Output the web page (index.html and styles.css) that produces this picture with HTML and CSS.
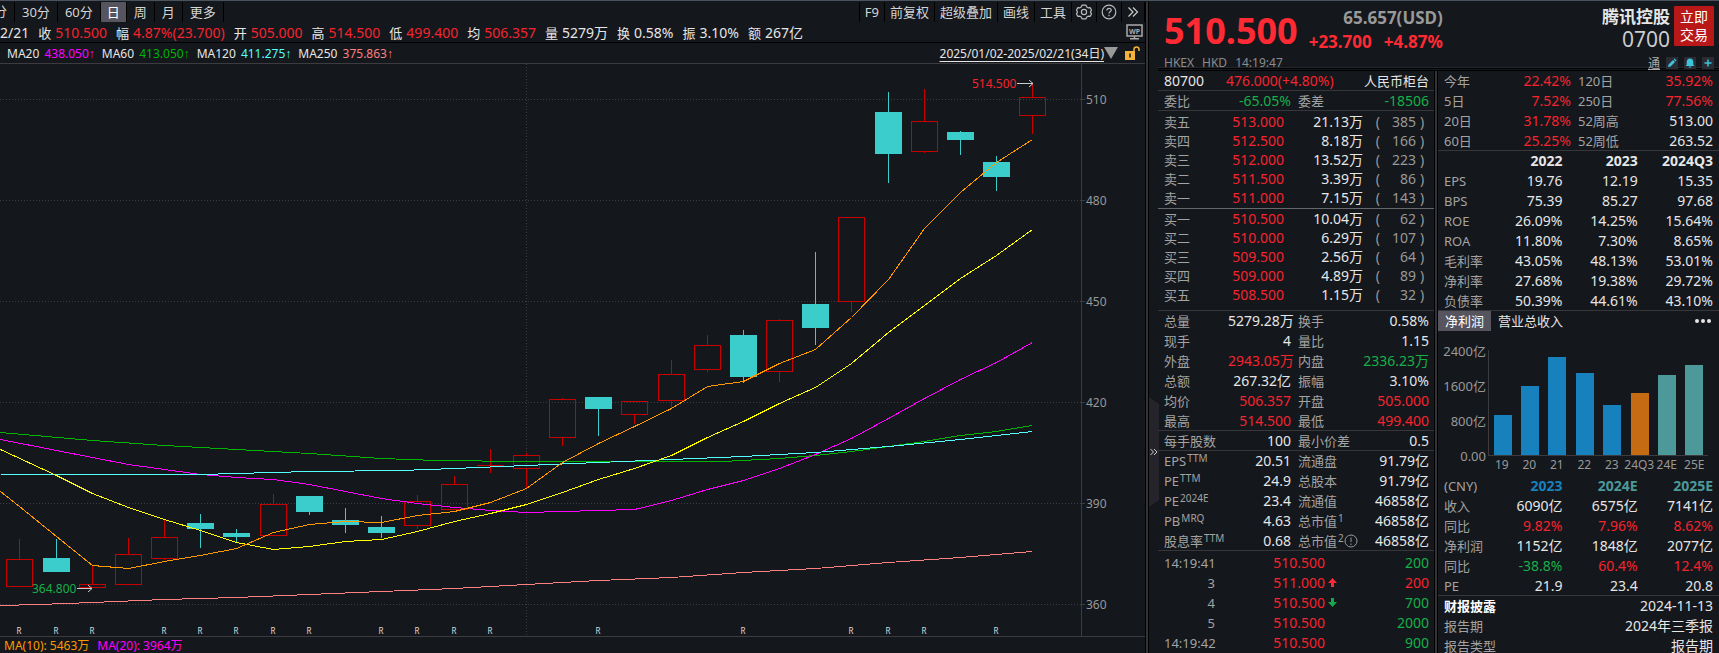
FILE: index.html
```html
<!DOCTYPE html>
<html lang="zh-CN">
<head>
  <meta charset="UTF-8">
  <title>腾讯控股 0700</title>
  <link rel="stylesheet" href="styles.css">
</head>
<body>
  <div class="app">
    <main class="chart-panel">
      <nav class="toolbar">
        <button class="tool cut">分</button>
        <button class="tool wide">30分</button>
        <button class="tool wide">60分</button>
        <button class="tool active">日</button>
        <button class="tool wide">周</button>
        <button class="tool wide">月</button>
        <button class="tool wide">更多</button>
        <span class="spacer"></span>
        <button class="tool first">F9</button>
        <button class="tool">前复权</button>
        <button class="tool">超级叠加</button>
        <button class="tool">画线</button>
        <button class="tool">工具</button>
        <button class="tool icon" aria-label="设置">
          <svg width="16" height="16" viewBox="0 0 16 16" fill="none" stroke="#bbb" stroke-width="1.2" stroke-linejoin="round">
            <path d="M6 1.200h4l.8 1.900 1.200.7 2.100-.2 1.500 2.600L14.300 8l1.300 1.800-1.500 2.600-2.100-.2-1.200.7-.8 1.900H6l-.8-1.900-1.200-.7-2.100.2L.4 9.800 1.700 8 .4 6.200l1.500-2.600 2.100.2 1.200-.7z"/>
            <circle cx="8" cy="8" r="2.600"/>
          </svg>
        </button>
        <button class="tool icon" aria-label="帮助">
          <svg width="16" height="16" viewBox="0 0 16 16" fill="none" stroke="#bbb" stroke-width="1.200">
            <circle cx="8" cy="8" r="6.800"/>
            <path d="M5.800 6.400c0-1.300 1-2.100 2.200-2.100s2.200.8 2.200 2c0 1.500-2.200 1.600-2.200 3.100M8 10.800v1.400"/>
          </svg>
        </button>
        <button class="tool" aria-label="展开">
          <svg width="12" height="14" viewBox="0 0 12 14" fill="none" stroke="#ccc" stroke-width="1.200">
            <path d="M1.500 2.500L6 7l-4.500 4.500M6 2.500L10.500 7 6 11.500"/>
          </svg>
        </button>
      </nav>

      <div class="info-row">
        <span>2/21</span>
        <span><i>收</i><b class="red">510.500</b></span>
        <span><i>幅</i><b class="red">4.87%(23.700)</b></span>
        <span><i>开</i><b class="red">505.000</b></span>
        <span><i>高</i><b class="red">514.500</b></span>
        <span><i>低</i><b class="red">499.400</b></span>
        <span><i>均</i><b class="red">506.357</b></span>
        <span><i>量</i><b>5279万</b></span>
        <span><i>换</i><b>0.58%</b></span>
        <span><i>振</i><b>3.10%</b></span>
        <span><i>额</i><b>267亿</b></span>
        <span class="spacer"></span>
        <svg width="17" height="16" viewBox="0 0 17 16" aria-hidden="true">
          <rect x="1" y="1" width="15" height="11" fill="none" stroke="#aaa" stroke-width="1.500"/>
          <path d="M8.500 12v3M4 14.700h9" stroke="#aaa" stroke-width="1.500"/>
          <text x="8.500" y="9.500" text-anchor="middle" class="wp-text">WP</text>
        </svg>
      </div>

      <div class="ma-row">
        <span class="ma5 cut-arrow">↑</span>
        <span>MA20 <b class="ma20">438.050↑</b></span>
        <span>MA60 <b class="ma60">413.050↑</b></span>
        <span>MA120 <b class="ma120">411.275↑</b></span>
        <span>MA250 <b class="ma250">375.863↑</b></span>
        <span class="spacer"></span>
        <a class="range" href="#range">2025/01/02-2025/02/21(34日)</a>
        <svg width="14" height="12" viewBox="0 0 14 12" aria-hidden="true"><path d="M0 0h14L7 12z" fill="#999"/></svg>
        <svg width="16" height="14" viewBox="0 0 16 14" aria-hidden="true">
          <rect x="0" y="5" width="10" height="9" fill="#f4b23c"/>
          <path d="M9 5V3.500a2.500 2.500 0 0 1 5 0V5" fill="none" stroke="#f4b23c" stroke-width="1.500"/>
          <path d="M5 7.500v4" stroke="#14171c" stroke-width="1.500"/>
        </svg>
      </div>

      <svg class="kline" viewBox="0 64 1145 572">
        <path class="grid" d="M0 99.500H1081M0 200.500H1081M0 301.500H1081M0 402.500H1081M0 503.500H1081M0 604.500H1081M526.500 64V636"/>
        <path class="axis" d="M1081.500 64V636M1081 99.500h4M1081 200.500h4M1081 301.500h4M1081 402.500h4M1081 503.500h4M1081 604.500h4"/>
        <g class="axis-text">
          <text x="1086" y="104">510</text>
          <text x="1086" y="205">480</text>
          <text x="1086" y="306">450</text>
          <text x="1086" y="407">420</text>
          <text x="1086" y="508">390</text>
          <text x="1086" y="609">360</text>
        </g>
        <g id="candles"></g>
        <g transform="translate(0.5 0.5)">
          <polyline class="l250" points="0,605 38,604 92,602 164,599 236,597 309,594 381,591 454,588 526,584 598,580 671,577 743,572 815,568 888,562 960,557 1032,551"/>
          <polyline class="l60" points="0,432 92,440 164,445 236,449 309,453 381,458 436,460 526,461 722,461 779,458 815,455 851,451 888,446 924,441 960,435 996,431 1032,425"/>
          <polyline class="l20" points="0,439 56,450 92,457 128,464 164,469 200,474 236,477 273,479 309,484 345,491 381,498 417,503 454,507 490,510 526,512 598,510 634,509 671,500 707,489 743,480 779,468 815,454 851,438 888,418 924,398 960,379 996,362 1032,342"/>
          <polyline class="l120" points="0,474 200,474 236,473 309,471 400,470 454,468 526,465 598,462 671,459 743,456 815,452 888,446 960,439 1032,431"/>
          <polyline class="l10" points="0,449 56,475 92,493 128,507 164,519 200,530 236,542 273,549 309,546 345,541 381,539 417,531 454,521 490,513 526,504 562,492 598,479 634,468 671,455 707,437 743,421 779,403 815,387 851,363 888,332 924,305 960,278 996,255 1032,229"/>
          <polyline class="l5" points="0,491 19,506 56,536 92,565 128,568 164,561 200,555 236,548 273,532 309,524 345,521 381,522 417,515 454,511 490,502 526,488 562,462 598,443 634,426 671,408 707,386 743,381 779,363 815,349 851,317 888,279 924,228 960,192 996,162 1032,139"/>
        </g>
        <text class="peak" x="972" y="88">514.500</text>
        <text class="low" x="32" y="593">364.800</text>
        <path class="pointer" d="M1017 83.500h16M1029 80l4 3.500-4 3.500M77 588.500h15M88 585l4 3.500-4 3.500"/>
        <g id="marks"></g>
      </svg>

      <div class="volume-row">
        <span class="ma5">MA(10): 5463万</span>
        <span class="ma20">MA(20): 3964万</span>
      </div>
    </main>

    <aside class="side">
      <button class="collapse" aria-label="收起">
        <svg width="10" height="110" viewBox="0 0 10 110">
          <path d="M0 0l10 7v96l-10 7z" fill="#26242b"/>
          <path d="M1.500 52l3 3-3 3M5 52l3 3-3 3" fill="none" stroke="#ccc"/>
        </svg>
      </button>
      <div class="side-main">
        <header class="quote">
          <div class="quote-top">
            <strong class="price">510.500</strong>
            <div class="change">
              <span class="usd">65.657(USD)</span>
              <span class="delta"><span>+23.700</span><span>+4.87%</span></span>
            </div>
            <div class="name">
              <h1>腾讯控股</h1>
              <span class="code">0700</span>
            </div>
            <button class="trade">立即<br>交易</button>
          </div>
          <div class="quote-sub">
            <span>HKEX</span><span>HKD</span><span>14:19:47</span>
            <span class="spacer"></span>
            <a class="tong" href="#connect">通</a>
            <button class="mini" aria-label="编辑">
              <svg width="12" height="12" viewBox="0 0 12 12"><path d="M2 10l.6-2.600L7 3l2 2-4.400 4.400zM7.600 2.400L8.500 1.500l2 2-.9.9z" fill="#3cc4dc"/></svg>
            </button>
            <button class="mini" aria-label="提醒">
              <svg width="12" height="12" viewBox="0 0 12 12"><path d="M6 1.500c2.200 0 3.300 1.600 3.300 3.500v2.500l1 1.500H1.700l1-1.500V5c0-1.900 1.100-3.500 3.300-3.500zM4.800 9.500h2.400v1H4.800z" fill="#3cc4dc"/></svg>
            </button>
            <button class="mini" aria-label="添加">
              <svg width="12" height="12" viewBox="0 0 12 12"><path d="M6 2.500v7M2.500 6h7" stroke="#3cc4dc" stroke-width="1.500"/></svg>
            </button>
          </div>
        </header>

        <div class="columns">
          <section class="col-left">
            <div class="block counter">
              <span>80700</span>
              <span class="red">476.000(+4.80%)</span>
              <span class="cn">人民币柜台</span>
            </div>
            <div class="block">
              <table class="pairs">
                <tr><th>委比</th><td class="green">-65.05%</td><th>委差</th><td class="green">-18506</td></tr>
              </table>
            </div>
            <div class="block asks">
              <table class="book">
                <tr><th>卖五</th><td>513.000</td><td>21.13万</td><td>(</td><td>385</td><td>)</td></tr>
                <tr><th>卖四</th><td>512.500</td><td>8.18万</td><td>(</td><td>166</td><td>)</td></tr>
                <tr><th>卖三</th><td>512.000</td><td>13.52万</td><td>(</td><td>223</td><td>)</td></tr>
                <tr><th>卖二</th><td>511.500</td><td>3.39万</td><td>(</td><td>86</td><td>)</td></tr>
                <tr><th>卖一</th><td>511.000</td><td>7.15万</td><td>(</td><td>143</td><td>)</td></tr>
              </table>
            </div>
            <div class="block bids">
              <table class="book">
                <tr><th>买一</th><td>510.500</td><td>10.04万</td><td>(</td><td>62</td><td>)</td></tr>
                <tr><th>买二</th><td>510.000</td><td>6.29万</td><td>(</td><td>107</td><td>)</td></tr>
                <tr><th>买三</th><td>509.500</td><td>2.56万</td><td>(</td><td>64</td><td>)</td></tr>
                <tr><th>买四</th><td>509.000</td><td>4.89万</td><td>(</td><td>89</td><td>)</td></tr>
                <tr><th>买五</th><td>508.500</td><td>1.15万</td><td>(</td><td>32</td><td>)</td></tr>
              </table>
            </div>
            <div class="block">
              <table class="pairs">
                <tr><th>总量</th><td>5279.28万</td><th>换手</th><td>0.58%</td></tr>
                <tr><th>现手</th><td>4</td><th>量比</th><td>1.15</td></tr>
                <tr><th>外盘</th><td class="red">2943.05万</td><th>内盘</th><td class="green">2336.23万</td></tr>
                <tr><th>总额</th><td>267.32亿</td><th>振幅</th><td>3.10%</td></tr>
                <tr><th>均价</th><td class="red">506.357</td><th>开盘</th><td class="red">505.000</td></tr>
                <tr><th>最高</th><td class="red">514.500</td><th>最低</th><td class="red">499.400</td></tr>
              </table>
            </div>
            <div class="block">
              <table class="pairs">
                <tr><th>每手股数</th><td>100</td><th>最小价差</th><td>0.5</td></tr>
              </table>
            </div>
            <div class="block">
              <table class="pairs">
                <tr><th>EPS<sup>TTM</sup></th><td>20.51</td><th>流通盘</th><td>91.79亿</td></tr>
                <tr><th>PE<sup>TTM</sup></th><td>24.9</td><th>总股本</th><td>91.79亿</td></tr>
                <tr><th>PE<sup>2024E</sup></th><td>23.4</td><th>流通值</th><td>46858亿</td></tr>
                <tr><th>PB<sup>MRQ</sup></th><td>4.63</td><th>总市值<sup>1</sup></th><td>46858亿</td></tr>
                <tr><th>股息率<sup>TTM</sup></th><td>0.68</td><th>总市值<sup>2</sup><svg class="tip" width="14" height="14" viewBox="0 0 14 14" fill="none" stroke="#999"><circle cx="7" cy="7" r="6"/><path d="M7 3.500v4.500M7 9.500v1.500"/></svg></th><td>46858亿</td></tr>
              </table>
            </div>
            <table class="ticks">
              <tr><th>14:19:41</th><td class="red">510.500</td><td></td><td class="green">200</td></tr>
              <tr><th>3</th><td class="red">511.000</td><td><svg width="9" height="10" viewBox="0 0 9 10"><path d="M4.500 0L9 5H6v4H3V5H0z" fill="#ff2a33"/></svg></td><td class="red">200</td></tr>
              <tr><th>4</th><td class="red">510.500</td><td><svg width="9" height="10" viewBox="0 0 9 10"><path d="M4.500 9L0 4h3V0h3v4h3z" fill="#16a84a"/></svg></td><td class="green">700</td></tr>
              <tr><th>5</th><td class="red">510.500</td><td></td><td class="green">2000</td></tr>
              <tr><th>14:19:42</th><td class="red">510.500</td><td></td><td class="green">900</td></tr>
            </table>
          </section>

          <section class="col-right">
            <div class="block">
              <table class="pairs">
                <tr><th>今年</th><td class="red">22.42%</td><th>120日</th><td class="red">35.92%</td></tr>
                <tr><th>5日</th><td class="red">7.52%</td><th>250日</th><td class="red">77.56%</td></tr>
                <tr><th>20日</th><td class="red">31.78%</td><th>52周高</th><td>513.00</td></tr>
                <tr><th>60日</th><td class="red">25.25%</td><th>52周低</th><td>263.52</td></tr>
              </table>
            </div>
            <div class="block">
              <table class="years">
                <tr class="head"><th></th><td>2022</td><td>2023</td><td>2024Q3</td></tr>
                <tr><th>EPS</th><td>19.76</td><td>12.19</td><td>15.35</td></tr>
                <tr><th>BPS</th><td>75.39</td><td>85.27</td><td>97.68</td></tr>
                <tr><th>ROE</th><td>26.09%</td><td>14.25%</td><td>15.64%</td></tr>
                <tr><th>ROA</th><td>11.80%</td><td>7.30%</td><td>8.65%</td></tr>
                <tr><th>毛利率</th><td>43.05%</td><td>48.13%</td><td>53.01%</td></tr>
                <tr><th>净利率</th><td>27.68%</td><td>19.38%</td><td>29.72%</td></tr>
                <tr><th>负债率</th><td>50.39%</td><td>44.61%</td><td>43.10%</td></tr>
              </table>
            </div>
            <div class="tabs">
              <button class="tab active">净利润</button>
              <button class="tab">营业总收入</button>
              <span class="spacer"></span>
              <button class="more" aria-label="更多"><i></i><i></i><i></i></button>
            </div>
            <div class="bar-chart">
              <div class="y-labels"><span>2400亿</span><span>1600亿</span><span>800亿</span><span>0.00</span></div>
              <div class="plot">
                <div class="bars">
                  <div class="bar" style="height: 38%"></div>
                  <div class="bar" style="height: 66%"></div>
                  <div class="bar" style="height: 93%"></div>
                  <div class="bar" style="height: 78%"></div>
                  <div class="bar" style="height: 48%"></div>
                  <div class="bar quarter" style="height: 59%"></div>
                  <div class="bar estimate" style="height: 76%"></div>
                  <div class="bar estimate" style="height: 86%"></div>
                </div>
                <div class="x-labels"><span>19</span><span>20</span><span>21</span><span>22</span><span>23</span><span>24Q3</span><span>24E</span><span>25E</span></div>
              </div>
            </div>
            <div class="block">
              <table class="years">
                <tr class="head"><th>(CNY)</th><td class="blue">2023</td><td class="teal">2024E</td><td class="teal">2025E</td></tr>
                <tr><th>收入</th><td>6090亿</td><td>6575亿</td><td>7141亿</td></tr>
                <tr><th>同比</th><td class="red">9.82%</td><td class="red">7.96%</td><td class="red">8.62%</td></tr>
                <tr><th>净利润</th><td>1152亿</td><td>1848亿</td><td>2077亿</td></tr>
                <tr><th>同比</th><td class="green">-38.8%</td><td class="red">60.4%</td><td class="red">12.4%</td></tr>
                <tr><th>PE</th><td>21.9</td><td>23.4</td><td>20.8</td></tr>
              </table>
            </div>
            <table class="report">
              <tr><th class="title">财报披露</th><td>2024-11-13</td></tr>
              <tr><th>报告期</th><td>2024年三季报</td></tr>
              <tr><th>报告类型</th><td>报告期</td></tr>
            </table>
          </section>
        </div>
      </div>
    </aside>
  </div>

  <script>
    // x, high, body top, body bottom, low, direction
    const candles = [
      [19, 539, 559, 587, 587, 'up'], [56, 539, 558, 572, 572, 'down'],
      [92, 566, 584, 588, 588, 'up'], [128, 538, 554, 585, 585, 'up'],
      [164, 520, 537, 559, 560, 'up'], [200, 514, 523, 529, 548, 'down'],
      [236, 529, 533, 537, 542, 'down'], [273, 494, 504, 536, 536, 'up'],
      [309, 496, 496, 512, 515, 'down'], [345, 508, 520, 525, 533, 'down'],
      [381, 516, 527, 533, 538, 'down'], [417, 495, 501, 526, 529, 'up'],
      [454, 476, 484, 510, 510, 'up'], [490, 449, 465, 466, 473, 'up'],
      [526, 453, 455, 469, 488, 'up'], [562, 398, 399, 438, 446, 'up'],
      [598, 397, 397, 409, 436, 'down'], [634, 401, 401, 415, 424, 'up'],
      [671, 360, 374, 401, 408, 'up'], [707, 335, 345, 370, 372, 'up'],
      [743, 330, 335, 377, 383, 'down'], [779, 319, 320, 372, 382, 'up'],
      [815, 252, 304, 328, 345, 'down'], [851, 217, 217, 302, 312, 'up'],
      [888, 92, 112, 154, 183, 'down'], [924, 89, 121, 152, 153, 'up'],
      [960, 131, 132, 140, 155, 'down'], [996, 156, 162, 177, 191, 'down'],
      [1032, 84, 97, 116, 134, 'up']
    ];
    const marks = [19, 56, 92, 164, 200, 236, 273, 309, 381, 417, 454, 490, 598, 743, 851, 888, 924, 996];

    document.getElementById('candles').innerHTML = candles.map(([x, high, top, bottom, low, dir]) => {
      const wick = `<path class="${dir}" d="M${x + 0.5} ${high}V${top}M${x + 0.5} ${bottom}V${low}"/>`;
      if (dir === 'down') {
        return wick + `<rect class="down-body" x="${x - 13}" y="${top}" width="27" height="${bottom - top}"/>`;
      }
      if (bottom - top === 1) {
        return `<path class="up" d="M${x + 0.5} ${high}V${low}M${x - 13} ${top + 0.5}h27"/>`;
      }
      return wick + `<rect class="up" x="${x - 12.5}" y="${top + 0.5}" width="26" height="${bottom - top - 1}"/>`;
    }).join('');

    document.getElementById('marks').innerHTML =
      marks.map(x => `<text class="mark" x="${x}" y="634">R</text>`).join('');
  </script>
</body>
</html>
```
FILE: styles.css
```css
* { box-sizing: border-box; }
body {
  margin: 0;
  background: #14171c;
  color: #e6e6e6;
  font-family: "Noto Sans", "Liberation Sans", "Noto Sans CJK SC", sans-serif;
  font-size: 14px;
  overflow: hidden;
}
button {
  font: inherit;
  color: inherit;
  background: none;
  border: 0;
  padding: 0;
  cursor: pointer;
}
a { color: inherit; }
i, b { font-style: normal; font-weight: normal; }
svg { display: block; flex: none; }
.spacer { flex: 1; }

.red { color: #f5242e; }
.green { color: #16b04a; }
.blue { color: #1781bd; }
.teal { color: #4d9999; }
.ma5 { color: #ff9900; }
.ma20 { color: #ff00ff; }
.ma60 { color: #00b400; }
.ma120 { color: #54ffff; }
.ma250 { color: #ff8080; }

.app {
  display: flex;
  height: 100vh;
  border-top: 1px solid #4a535d;
  padding-top: 1px;
}

/* chart panel */
.chart-panel {
  flex: 1;
  min-width: 0;
  display: flex;
  flex-direction: column;
  overflow: hidden;
}
.toolbar {
  display: flex;
  height: 20px;
  font-size: 13px;
  line-height: 18px;
  color: #d4d4d4;
}
.tool {
  padding: 0 5px;
  border-right: 1px solid #000;
  white-space: nowrap;
}
.tool.wide { padding: 0 7px; }
.tool.icon { padding: 0 4px; }
.tool.first { border-left: 1px solid #000; }
.tool.active { padding: 0 6px; background: #55545f; color: #fff; }
.tool.cut {
  display: flex;
  justify-content: flex-end;
  width: 15px;
  padding-right: 7px;
  overflow: hidden;
}
.info-row {
  display: flex;
  align-items: center;
  gap: 9px;
  height: 21px;
  padding-right: 2px;
  border-bottom: 1px solid #000;
  white-space: nowrap;
}
.info-row i { font-size: 13px; margin-right: 4px; }
.wp-text { font-size: 7px; font-weight: bold; fill: #aaa; }
.ma-row {
  display: flex;
  align-items: center;
  gap: 7px;
  height: 21px;
  padding-right: 4px;
  border-bottom: 1px solid #3c3c40;
  font-size: 12px;
  white-space: nowrap;
}
.ma-row b { margin-left: 2px; }
.cut-arrow { margin-left: -6px; }
.range { margin-right: -7px; text-underline-offset: 3px; }
.kline {
  flex: 1;
  width: 100%;
  min-height: 0;
}
.volume-row {
  display: flex;
  gap: 8px;
  height: 17px;
  padding-left: 4px;
  border-top: 1px solid #3c3c40;
  font-size: 12px;
  line-height: 18px;
}

.kline path, .kline rect, .kline polyline { fill: none; shape-rendering: crispEdges; }
.grid { stroke: #3c3e44; stroke-dasharray: 1 2; }
.axis { stroke: #3c3c40; }
.axis-text { font-size: 12px; fill: #999; }
.kline .up { stroke: #c80000; }
.kline .down { stroke: #3bcccc; }
.kline .down-body { fill: #3bcccc; }
.l5 { stroke: #ff9900; }
.l10 { stroke: #ffff00; }
.l20 { stroke: #ff00ff; }
.l60 { stroke: #00b400; }
.l120 { stroke: #54ffff; }
.l250 { stroke: #ff8080; }
.peak { font-size: 12px; fill: #f5242e; }
.low { font-size: 12px; fill: #16b04a; }
.kline .pointer { stroke: #ccc; shape-rendering: auto; }
.mark { font-size: 8px; fill: #ddd; text-anchor: middle; }

/* quote panel */
.side {
  flex: none;
  display: flex;
  width: 574px;
  border-left: 1px solid #000;
  box-shadow: inset 2px 0 #333338, inset 3px 0 #000;
  padding-left: 3px;
}
.collapse {
  align-self: flex-start;
  width: 9px;
  padding-top: 395px;
}
.side-main {
  flex: 1;
  min-width: 0;
  overflow: hidden;
}
.quote {
  height: 69px;
  padding: 4px 5px 0 6px;
  border-bottom: 3px double #000;
  box-shadow: inset 0 -1px #26272c;
}
.quote-top { display: flex; height: 48px; }
.price {
  font-size: 36px;
  line-height: 50px;
  color: #ff2a33;
}
.change {
  display: flex;
  flex-direction: column;
  align-items: flex-end;
  margin-left: 11px;
  font-size: 17px;
  font-weight: bold;
  line-height: 24px;
}
.usd { color: #999; }
.delta { display: flex; gap: 12px; color: #ff2a33; }
.name {
  flex: 1;
  text-align: right;
  margin-right: 4px;
}
.name h1 {
  margin: 0;
  font-size: 17px;
  font-weight: bold;
  line-height: 22px;
}
.code { display: block; font-size: 21px; line-height: 22px; color: #ccc; }
.trade {
  width: 40px;
  height: 40px;
  background: #b81818;
  color: #fff;
  border-radius: 1px;
  line-height: 18px;
}
.quote-sub {
  display: flex;
  align-items: center;
  gap: 6px;
  height: 17px;
  font-size: 12px;
  color: #8c8c8c;
}
.quote-sub span + span { margin-left: 2px; }
.tong { color: #aaa; }
.mini { background: #2a2b33; }

.columns { display: flex; }
.col-left {
  flex: none;
  width: 276px;
}
.col-right {
  flex: 1;
  min-width: 0;
  border-left: 4px double #000;
  background: linear-gradient(#333338, #333338) 1px 0 / 2px 100% no-repeat border-box;
}
.block { box-shadow: inset 0 -1px #36363b; }
.asks { padding: 1px 0 2px; box-shadow: inset 0 -1px #66666b; }
.bids { padding: 0 0 7px; }
.col-left .block, .ticks { padding-left: 6px; padding-right: 5px; }
.col-right .block, .report { padding-left: 6px; padding-right: 6px; }

table {
  width: 100%;
  border-collapse: separate;
  border-spacing: 0;
  table-layout: fixed;
  line-height: 18px;
}
th, td {
  height: 20px;
  padding: 0;
  text-align: right;
  white-space: nowrap;
}
th {
  text-align: left;
  font-size: 13px;
  font-weight: normal;
  color: #a3a3a3;
}
sup {
  font-size: 10px;
  line-height: 0;
  margin-left: 1px;
  vertical-align: 4px;
}
.tip { display: inline-block; vertical-align: -2px; }

.counter {
  display: flex;
  height: 20px;
  line-height: 20px;
}
.counter .red { flex: 1; margin-left: 22px; }
.cn { font-size: 13px; }
.pairs th:nth-child(1) { width: 64px; }
.pairs td:nth-child(2) { width: 63px; }
.pairs th:nth-child(3) { width: 70px; padding-left: 7px; }
.book th, .book td { height: 19px; }
.book th { width: 40px; }
.book td:nth-child(2) { width: 80px; color: #f5242e; }
.book td:nth-child(3) { width: 79px; }
.book td:nth-child(4) { width: 17px; }
.book td:nth-child(5) { width: 36px; }
.book td:nth-child(n+4) { color: #999; }
.book td:nth-child(6) { text-align: left; padding-left: 4px; }
.ticks { padding-top: 2px; }
.ticks th { width: 51px; text-align: right; }
.ticks td:nth-child(2) { width: 110px; }
.ticks td:nth-child(3) { width: 20px; padding-left: 3px; }
.years th { width: 43px; }
.years td { width: 75px; }
.head td { font-weight: bold; }
.report th { width: 80px; }
.report .title { font-weight: bold; color: #fff; }

.tabs {
  display: flex;
  height: 20px;
  font-size: 13px;
  line-height: 18px;
}
.tab { padding: 0 7px; }
.tab.active { background: #55545f; color: #fff; }
.more {
  display: flex;
  align-items: center;
  gap: 2px;
  padding-right: 8px;
}
.more i {
  width: 4px;
  height: 4px;
  border-radius: 50%;
  background: #e6e6e6;
}
.bar-chart {
  display: flex;
  padding: 12px 11px 2px 3px;
  color: #999;
}
.y-labels {
  display: flex;
  flex-direction: column;
  width: 47px;
  padding-right: 2px;
  text-align: right;
  font-size: 13px;
}
.y-labels span { height: 35px; line-height: 16px; }
.y-labels span:last-child { height: 16px; }
.plot { flex: 1; padding-top: 7px; }
.bars {
  display: grid;
  grid-template-columns: repeat(8, 1fr);
  align-items: end;
  justify-items: center;
  height: 106px;
  border-left: 1px solid #3c3c40;
  border-bottom: 1px solid #3c3c40;
}
.bar { width: 18px; background: #1781bd; }
.bar.quarter { background: #c56b14; }
.bar.estimate { background: #4d9999; }
.x-labels {
  display: grid;
  grid-template-columns: repeat(8, 1fr);
  justify-items: center;
  font-size: 12px;
  line-height: 18px;
}
.x-labels span { width: 40px; margin: 0 -8px; text-align: center; }
```
